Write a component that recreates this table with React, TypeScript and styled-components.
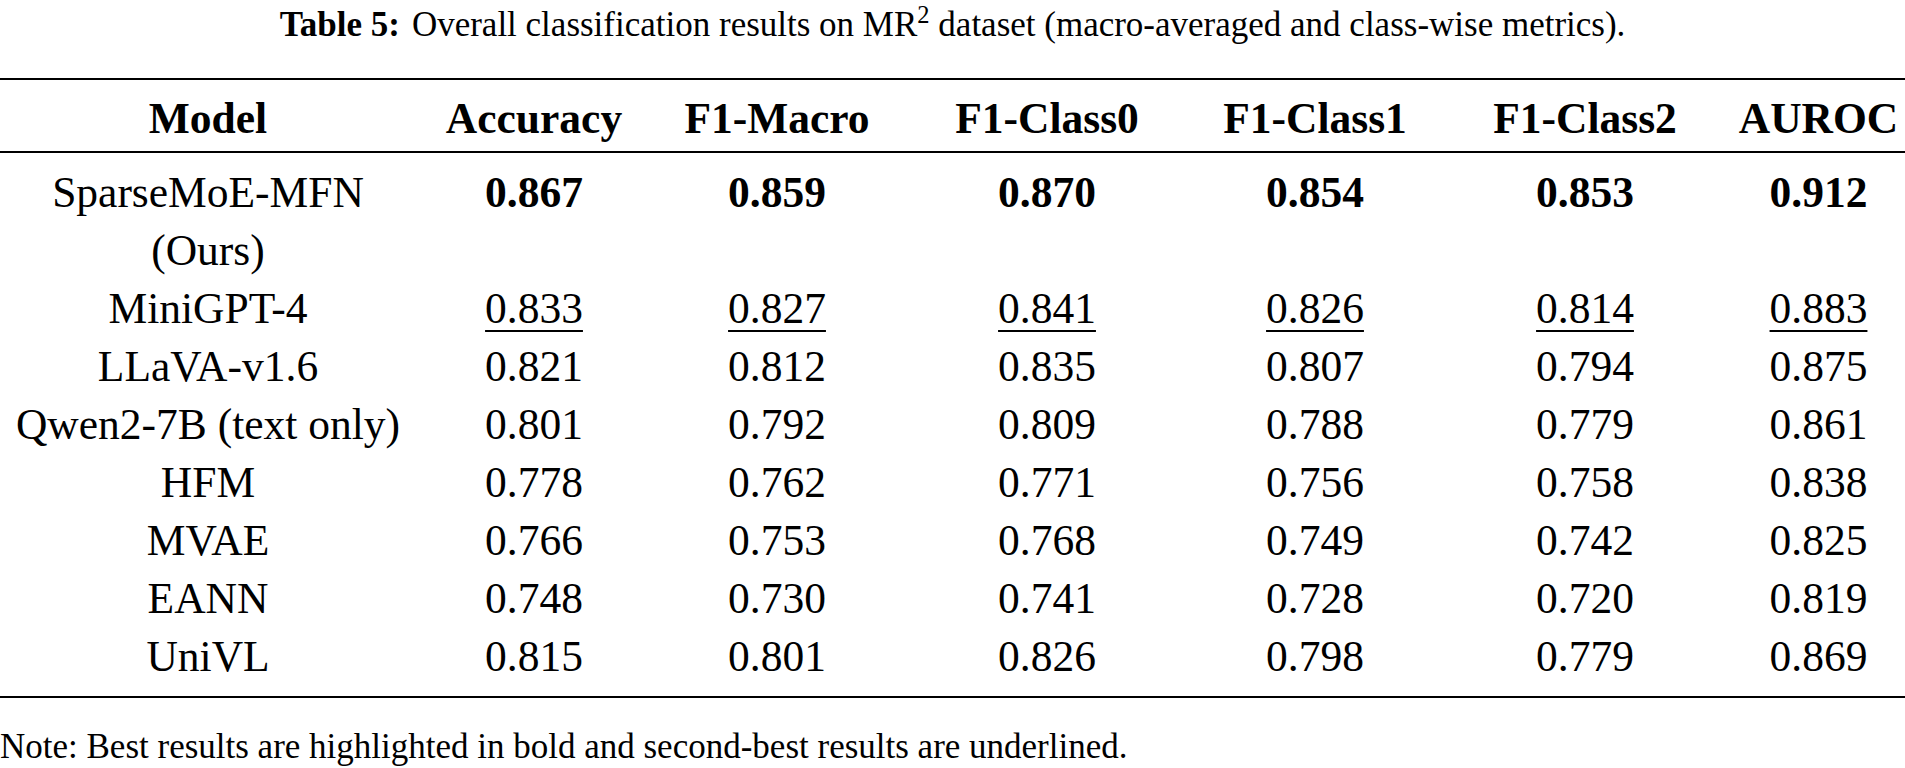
import React from 'react';
import styled, { createGlobalStyle } from 'styled-components';

const GlobalStyle = createGlobalStyle`
  html, body {
    margin: 0;
    padding: 0;
    background: #fff;
  }
  body {
    font-family: "Liberation Serif", "Times New Roman", serif;
    color: #000;
  }
`;

const Page = styled.div`
  width: 1905px;
  padding-top: 3px;
`;

const Caption = styled.div`
  font-size: 35px;
  line-height: 44px;
  text-align: center;
  margin-bottom: 31px;
  white-space: nowrap;
`;

const CaptionLabel = styled.b`
  margin-right: 12px;
`;

const Sup = styled.sup`
  font-size: 0.7em;
  line-height: 0;
`;

const Table = styled.table`
  width: 1905px;
  table-layout: fixed;
  border-collapse: collapse;
  font-size: 43.5px;
  line-height: 58px;
`;

const Col = styled.col<{ $w: number }>`
  width: ${(p) => p.$w}px;
`;

const HeadRow = styled.tr`
  border-top: 2px solid #000;
  border-bottom: 2px solid #000;
`;

const HeadCell = styled.th`
  font-weight: bold;
  text-align: center;
  padding: 9px 0 4px;
  white-space: nowrap;
`;

const BodyRow = styled.tr<{ $first?: boolean; $last?: boolean }>`
  border-bottom: ${(p) => (p.$last ? '2px solid #000' : 'none')};
  & > td {
    padding-top: ${(p) => (p.$first ? 10 : 0)}px;
    padding-bottom: ${(p) => (p.$last ? 11 : 0)}px;
  }
`;

const Cell = styled.td`
  text-align: center;
  vertical-align: top;
  padding: 0;
  white-space: nowrap;
`;

const Value = styled.span<{ $rank?: 'best' | 'second' }>`
  font-weight: ${(p) => (p.$rank === 'best' ? 'bold' : 'normal')};
  text-decoration: ${(p) => (p.$rank === 'second' ? 'underline' : 'none')};
  text-decoration-thickness: 2px;
  text-underline-offset: 7px;
`;

const Note = styled.div`
  font-size: 35px;
  line-height: 44px;
  margin-top: 27px;
  white-space: nowrap;
`;

const colWidths = [416, 236, 250, 290, 246, 294, 173];

const headers = ['Model', 'Accuracy', 'F1-Macro', 'F1-Class0', 'F1-Class1', 'F1-Class2', 'AUROC'];

type Row = {
  model: React.ReactNode;
  values: string[];
  rank?: 'best' | 'second';
};

const rows: Row[] = [
  {
    model: <>SparseMoE-MFN<br />(Ours)</>,
    values: ['0.867', '0.859', '0.870', '0.854', '0.853', '0.912'],
    rank: 'best',
  },
  {
    model: 'MiniGPT-4',
    values: ['0.833', '0.827', '0.841', '0.826', '0.814', '0.883'],
    rank: 'second',
  },
  { model: 'LLaVA-v1.6', values: ['0.821', '0.812', '0.835', '0.807', '0.794', '0.875'] },
  { model: 'Qwen2-7B (text only)', values: ['0.801', '0.792', '0.809', '0.788', '0.779', '0.861'] },
  { model: 'HFM', values: ['0.778', '0.762', '0.771', '0.756', '0.758', '0.838'] },
  { model: 'MVAE', values: ['0.766', '0.753', '0.768', '0.749', '0.742', '0.825'] },
  { model: 'EANN', values: ['0.748', '0.730', '0.741', '0.728', '0.720', '0.819'] },
  { model: 'UniVL', values: ['0.815', '0.801', '0.826', '0.798', '0.779', '0.869'] },
];

export default function App() {
  return (
    <Page>
      <GlobalStyle />
      <Caption>
        <CaptionLabel>Table 5:</CaptionLabel>
        Overall classification results on MR<Sup>2</Sup> dataset (macro-averaged and class-wise metrics).
      </Caption>

      <Table>
        <colgroup>
          {colWidths.map((w, i) => (
            <Col key={i} $w={w} />
          ))}
        </colgroup>
        <thead>
          <HeadRow>
            {headers.map((h) => (
              <HeadCell key={h}>{h}</HeadCell>
            ))}
          </HeadRow>
        </thead>
        <tbody>
          {rows.map((r, i) => (
            <BodyRow key={i} $first={i === 0} $last={i === rows.length - 1}>
              <Cell>{r.model}</Cell>
              {r.values.map((v, j) => (
                <Cell key={j}>
                  <Value $rank={r.rank}>{v}</Value>
                </Cell>
              ))}
            </BodyRow>
          ))}
        </tbody>
      </Table>

      <Note>Note: Best results are highlighted in bold and second-best results are underlined.</Note>
    </Page>
  );
}
